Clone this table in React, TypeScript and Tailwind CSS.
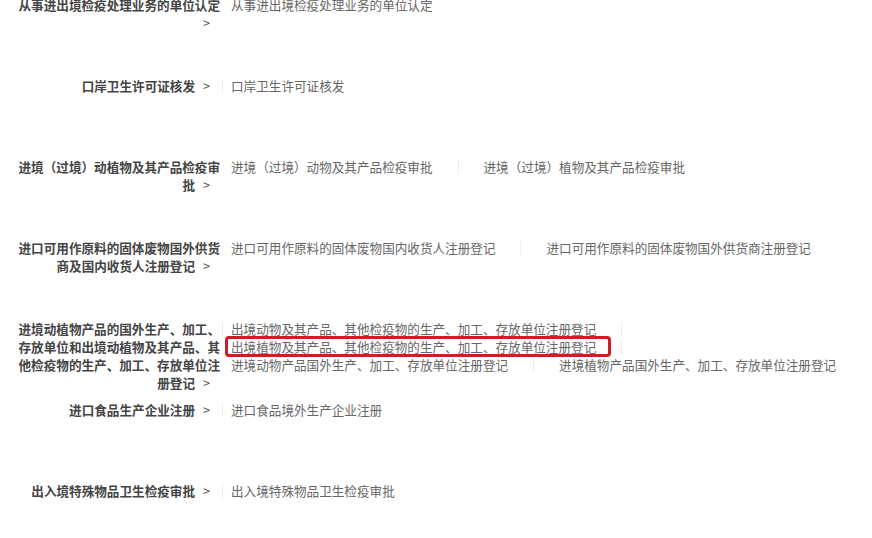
import React from 'react';

type Row = {
  label: string;
  items: string[];
  sep?: boolean;
  boxed?: number;
};

const rows: Row[] = [
  { label: '从事进出境检疫处理业务的单位认定', items: ['从事进出境检疫处理业务的单位认定'] },
  { label: '口岸卫生许可证核发', items: ['口岸卫生许可证核发'], sep: true },
  {
    label: '进境（过境）动植物及其产品检疫审批',
    items: ['进境（过境）动物及其产品检疫审批', '进境（过境）植物及其产品检疫审批'],
  },
  {
    label: '进口可用作原料的固体废物国外供货商及国内收货人注册登记',
    items: ['进口可用作原料的固体废物国内收货人注册登记', '进口可用作原料的固体废物国外供货商注册登记'],
  },
  {
    label: '进境动植物产品的国外生产、加工、存放单位和出境动植物及其产品、其他检疫物的生产、加工、存放单位注册登记',
    items: [
      '出境动物及其产品、其他检疫物的生产、加工、存放单位注册登记',
      '出境植物及其产品、其他检疫物的生产、加工、存放单位注册登记',
      '进境动物产品国外生产、加工、存放单位注册登记',
      '进境植物产品国外生产、加工、存放单位注册登记',
    ],
    sep: true,
    boxed: 1,
  },
  { label: '进口食品生产企业注册', items: ['进口食品境外生产企业注册'], sep: true },
  { label: '出入境特殊物品卫生检疫审批', items: ['出入境特殊物品卫生检疫审批'], sep: true },
];

function App() {
  const styles = {
    page: 'w-full min-h-screen bg-white overflow-hidden text-[12.6px] leading-[18px]',
    list: '-mt-[4px] flex flex-col',
    row: 'flex h-[81px] items-start',
    label: 'ml-[17px] w-[203px] shrink-0 text-right font-bold text-[#444]',
    arrow: 'inline-block ml-[8px] mr-[10px] font-normal text-[#555]',
    sepCol: 'ml-[2px] w-[9px] shrink-0 flex pt-[2px]',
    sepLine: 'w-px h-[14px] bg-[#ececec]',
    items: 'flex flex-wrap flex-1 min-w-0 text-[#666]',
    itemSep: 'mx-[25px] w-px h-[14px] mt-[2px] bg-[#ececec]',
  };

  return (
    <main className={styles.page} style={{ fontFamily: '"Noto Sans CJK SC", "Noto Sans", sans-serif' }}>
      <div className={styles.list}>
        {rows.map((row, r) => (
          <section key={r} className={styles.row}>
            <div className={styles.label}>
              {row.label}
              <span className={styles.arrow}>&gt;</span>
            </div>
            <div className={styles.sepCol}>{row.sep && <div className={styles.sepLine} />}</div>
            <div className={styles.items}>
              {row.items.map((item, i) => (
                <div key={i} className="flex items-start whitespace-nowrap">
                  <span className="relative">
                    {item}
                    {row.boxed === i && (
                      <span className="absolute -left-[6px] -right-[15px] -top-[2px] -bottom-[1px] border-[3px] border-[#cc1f24] rounded-[4px]" />
                    )}
                  </span>
                  {i < row.items.length - 1 && <span className={styles.itemSep} />}
                </div>
              ))}
            </div>
          </section>
        ))}
      </div>
    </main>
  );
}

export default App;
